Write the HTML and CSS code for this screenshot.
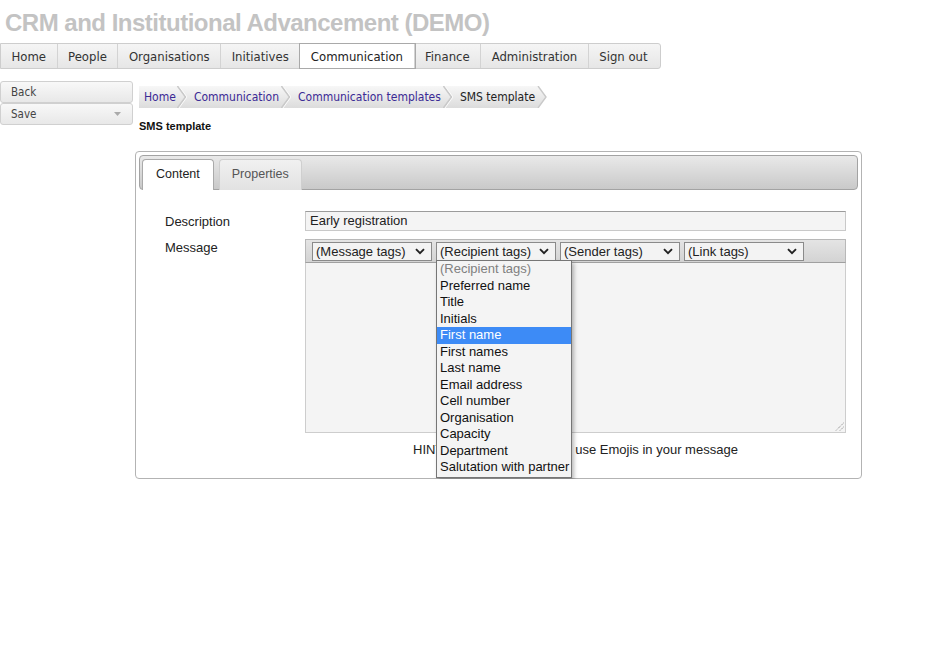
FILE: index.html
```html
<!DOCTYPE html>
<html>
<head>
<meta charset="utf-8">
<title>SMS template</title>
<link rel="stylesheet" href="styles.css">
</head>
<body>
<h1 class="site-title">CRM and Institutional Advancement (DEMO)</h1>
<ul class="topnav">
  <li class="nav-item">Home</li>
  <li class="nav-item">People</li>
  <li class="nav-item">Organisations</li>
  <li class="nav-item">Initiatives</li>
  <li class="nav-item active">Communication</li>
  <li class="nav-item">Finance</li>
  <li class="nav-item">Administration</li>
  <li class="nav-item last">Sign out</li>
</ul>
<div class="main">
  <div class="sidebar">
    <div class="side-btn">Back</div>
    <div class="side-btn">Save
      <svg class="caret" width="7" height="4" viewBox="0 0 7 4"><polygon points="0,0 7,0 3.5,4" fill="#aaa"/></svg>
    </div>
  </div>
  <div class="content">
    <div class="crumbs">
      <span class="crumb first link">Home</span><svg class="chev" width="10" height="22" viewBox="0 0 10 22"><polyline points="0.5,0 8.5,11 0.5,22" fill="none" stroke="#c9c9c9" stroke-width="1.6"/><polyline points="2,0 10,11 2,22" fill="none" stroke="#fafafa" stroke-width="1"/></svg>
      <span class="crumb link">Communication</span><svg class="chev" width="10" height="22" viewBox="0 0 10 22"><polyline points="0.5,0 8.5,11 0.5,22" fill="none" stroke="#c9c9c9" stroke-width="1.6"/><polyline points="2,0 10,11 2,22" fill="none" stroke="#fafafa" stroke-width="1"/></svg>
      <span class="crumb link">Communication templates</span><svg class="chev" width="10" height="22" viewBox="0 0 10 22"><polyline points="0.5,0 8.5,11 0.5,22" fill="none" stroke="#c9c9c9" stroke-width="1.6"/><polyline points="2,0 10,11 2,22" fill="none" stroke="#fafafa" stroke-width="1"/></svg>
      <span class="crumb current">SMS template</span><svg class="chev end" width="10" height="22" viewBox="0 0 10 22"><defs><linearGradient id="cg" x1="0" y1="0" x2="0" y2="1"><stop offset="0" stop-color="#f7f7f7"/><stop offset="1" stop-color="#dcdcdc"/></linearGradient></defs><polygon points="0,0 1,0 9,11 1,22 0,22" fill="url(#cg)"/><polyline points="1,0 9,11 1,22" fill="none" stroke="#c9c9c9" stroke-width="1.4"/></svg>
    </div>
    <div class="page-heading">SMS template</div>
    <div class="panel">
      <div class="tabbar">
        <div class="tab selected">Content</div>
        <div class="tab">Properties</div>
      </div>
      <div class="form">
        <div class="label">Description</div>
        <div class="input">Early registration</div>
        <div class="label msg">Message</div>
        <div class="editor">
          <div class="toolbar">
            <div class="sel">(Message tags)<svg class="arrow" width="10" height="7" viewBox="0 0 10 7"><polyline points="1,1.2 5,5.2 9,1.2" fill="none" stroke="#222" stroke-width="1.9"/></svg></div>
            <div class="sel open">(Recipient tags)<svg class="arrow" width="10" height="7" viewBox="0 0 10 7"><polyline points="1,1.2 5,5.2 9,1.2" fill="none" stroke="#222" stroke-width="1.9"/></svg>
              <ul class="droplist">
                <li class="opt placeholder">(Recipient tags)</li>
                <li class="opt">Preferred name</li>
                <li class="opt">Title</li>
                <li class="opt">Initials</li>
                <li class="opt hl">First name</li>
                <li class="opt">First names</li>
                <li class="opt">Last name</li>
                <li class="opt">Email address</li>
                <li class="opt">Cell number</li>
                <li class="opt">Organisation</li>
                <li class="opt">Capacity</li>
                <li class="opt">Department</li>
                <li class="opt">Salutation with partner</li>
              </ul>
            </div>
            <div class="sel">(Sender tags)<svg class="arrow" width="10" height="7" viewBox="0 0 10 7"><polyline points="1,1.2 5,5.2 9,1.2" fill="none" stroke="#222" stroke-width="1.9"/></svg></div>
            <div class="sel">(Link tags)<svg class="arrow" width="10" height="7" viewBox="0 0 10 7"><polyline points="1,1.2 5,5.2 9,1.2" fill="none" stroke="#222" stroke-width="1.9"/></svg></div>
          </div>
          <div class="textarea">
            <svg class="grip" width="9" height="9" viewBox="0 0 9 9"><line x1="8.5" y1="1" x2="1" y2="8.5" stroke="#777" stroke-width="1" stroke-dasharray="1,1"/><line x1="8.5" y1="5" x2="5" y2="8.5" stroke="#777" stroke-width="1" stroke-dasharray="1,1"/></svg>
          </div>
        </div>
        <div class="hint">HINT: Press Windows + . to use Emojis in your message</div>
      </div>
    </div>
  </div>
</div>
</body>
</html>
```
FILE: styles.css
```css
body {
  margin: 0;
  font-family: "Liberation Sans", Arial, sans-serif;
  color: #222;
  background: #fff;
}
.site-title {
  margin: 0;
  height: 43px;
  box-sizing: border-box;
  padding: 8px 0 0 5px;
  font-size: 24px;
  line-height: 30px;
  font-weight: bold;
  letter-spacing: -0.5px;
  color: #c3c3c3;
  white-space: nowrap;
}
.topnav {
  display: flex;
  margin: 0;
  padding: 0;
  list-style: none;
  width: fit-content;
  height: 26px;
  box-sizing: border-box;
  border: 1px solid #cdcdcd;
  border-radius: 0 3px 3px 0;
  background: linear-gradient(#f5f5f5, #e6e6e6);
  font-family: "DejaVu Sans Condensed", "DejaVu Sans", sans-serif;
  font-stretch: condensed;
  font-size: 13px;
  color: #333;
}
.nav-item {
  padding: 0 10.5px;
  line-height: 25px;
  border-right: 1px solid #d3d3d3;
  white-space: nowrap;
}
.nav-item.last {
  border-right: none;
  padding-right: 12px;
}
.nav-item.active {
  background: #fff;
  box-shadow: 0 0 0 1px #a9a9a9;
  position: relative;
  color: #222;
}
.main {
  display: flex;
  margin-top: 12px;
}
.sidebar {
  width: 133px;
  flex: none;
}
.side-btn {
  height: 22px;
  box-sizing: border-box;
  border: 1px solid #d0d0d0;
  border-radius: 3px;
  background: linear-gradient(#f8f8f8, #e8e8e8);
  padding-left: 10px;
  font-family: "DejaVu Sans Condensed", "DejaVu Sans", sans-serif;
  font-stretch: condensed;
  font-size: 11.5px;
  line-height: 21px;
  color: #444;
  display: flex;
  align-items: center;
  justify-content: space-between;
  padding-right: 11px;
}
.caret {
  display: block;
}
.content {
  margin-left: 2px;
  width: 727px;
}
.crumbs {
  display: flex;
  margin: 5px 0 0 4px;
  height: 22px;
  font-family: "DejaVu Sans Condensed", "DejaVu Sans", sans-serif;
  font-stretch: condensed;
  font-size: 12px;
  line-height: 22px;
}
.crumb {
  background: linear-gradient(#f7f7f7, #dcdcdc);
  padding: 0 2px 0 7px;
  white-space: nowrap;
}
.crumb.first {
  padding-left: 5px;
  padding-right: 1px;
}
.crumb.link {
  color: #3b2a95;
}
.crumb.current {
  color: #222;
}
.chev {
  display: block;
  background: linear-gradient(#f7f7f7, #dcdcdc);
}
.chev.end {
  background: none;
}
.page-heading {
  margin: 12px 0 0 4px;
  font-size: 11px;
  font-weight: bold;
  line-height: 13px;
  color: #111;
}
.panel {
  margin-top: 18px;
  border: 1px solid #b3b3b3;
  border-radius: 4px;
  padding: 3px 3px 20px;
}
.tabbar {
  display: flex;
  gap: 5px;
  height: 35px;
  box-sizing: border-box;
  border: 1px solid #a3a3a3;
  border-radius: 4px;
  background: linear-gradient(#e9e9e9, #c9c9c9);
  padding: 3px 0 0 2px;
}
.tab {
  height: 31px;
  box-sizing: border-box;
  border: 1px solid #cfcfcf;
  border-bottom: none;
  border-radius: 4px 4px 0 0;
  background: linear-gradient(#f1f1f1, #e2e2e2);
  padding: 0 12px;
  font-size: 12.5px;
  line-height: 29px;
  color: #555;
}
.tab.selected {
  background: #fff;
  border-color: #aaa;
  color: #222;
  padding: 0 13px;
}
.form {
  display: grid;
  grid-template-columns: 140px 541px;
  row-gap: 7px;
  margin: 21px 0 0 26px;
  font-size: 13px;
}
.label {
  line-height: 21px;
  color: #222;
}
.label.msg {
  line-height: 18px;
}
.input {
  height: 20px;
  box-sizing: border-box;
  border: 1px solid #c9c9c9;
  border-top-color: #9b9b9b;
  background: #f4f4f4;
  padding-left: 4px;
  line-height: 18px;
}
.editor {
  display: flex;
  flex-direction: column;
}
.toolbar {
  height: 24px;
  box-sizing: border-box;
  border: 1px solid #b8b8b8;
  border-bottom-color: #a0a0a0;
  background: linear-gradient(#e4e4e4, #d3d3d3);
  display: flex;
  gap: 4px;
  padding: 2px 0 0 6px;
}
.sel {
  position: relative;
  width: 120px;
  height: 19px;
  box-sizing: border-box;
  border: 1px solid #8a8a8a;
  background: #f3f3f3;
  padding-left: 3px;
  line-height: 17px;
  white-space: nowrap;
  display: flex;
  align-items: center;
}
.arrow {
  position: absolute;
  right: 6px;
  top: 5px;
}
.droplist {
  position: absolute;
  left: -1px;
  top: 17px;
  width: 136px;
  box-sizing: border-box;
  margin: 0;
  padding: 0 0 1px;
  list-style: none;
  background: #f4f4f4;
  border: 1px solid #767676;
  box-shadow: 2px 3px 4px rgba(0, 0, 0, 0.28);
  z-index: 5;
}
.opt {
  height: 16.5px;
  line-height: 16.5px;
  padding-left: 3px;
  color: #111;
  white-space: nowrap;
}
.opt.placeholder {
  color: #808080;
}
.opt.hl {
  background: #3d8bf6;
  color: #fff;
}
.textarea {
  position: relative;
  height: 170px;
  box-sizing: border-box;
  border: 1px solid #cdcdcd;
  border-top: none;
  background: #f4f4f4;
}
.grip {
  position: absolute;
  right: 1px;
  bottom: 1px;
}
.hint {
  grid-column: 2;
  margin-top: 2px;
  text-align: center;
  line-height: 16px;
  color: #222;
}
```
